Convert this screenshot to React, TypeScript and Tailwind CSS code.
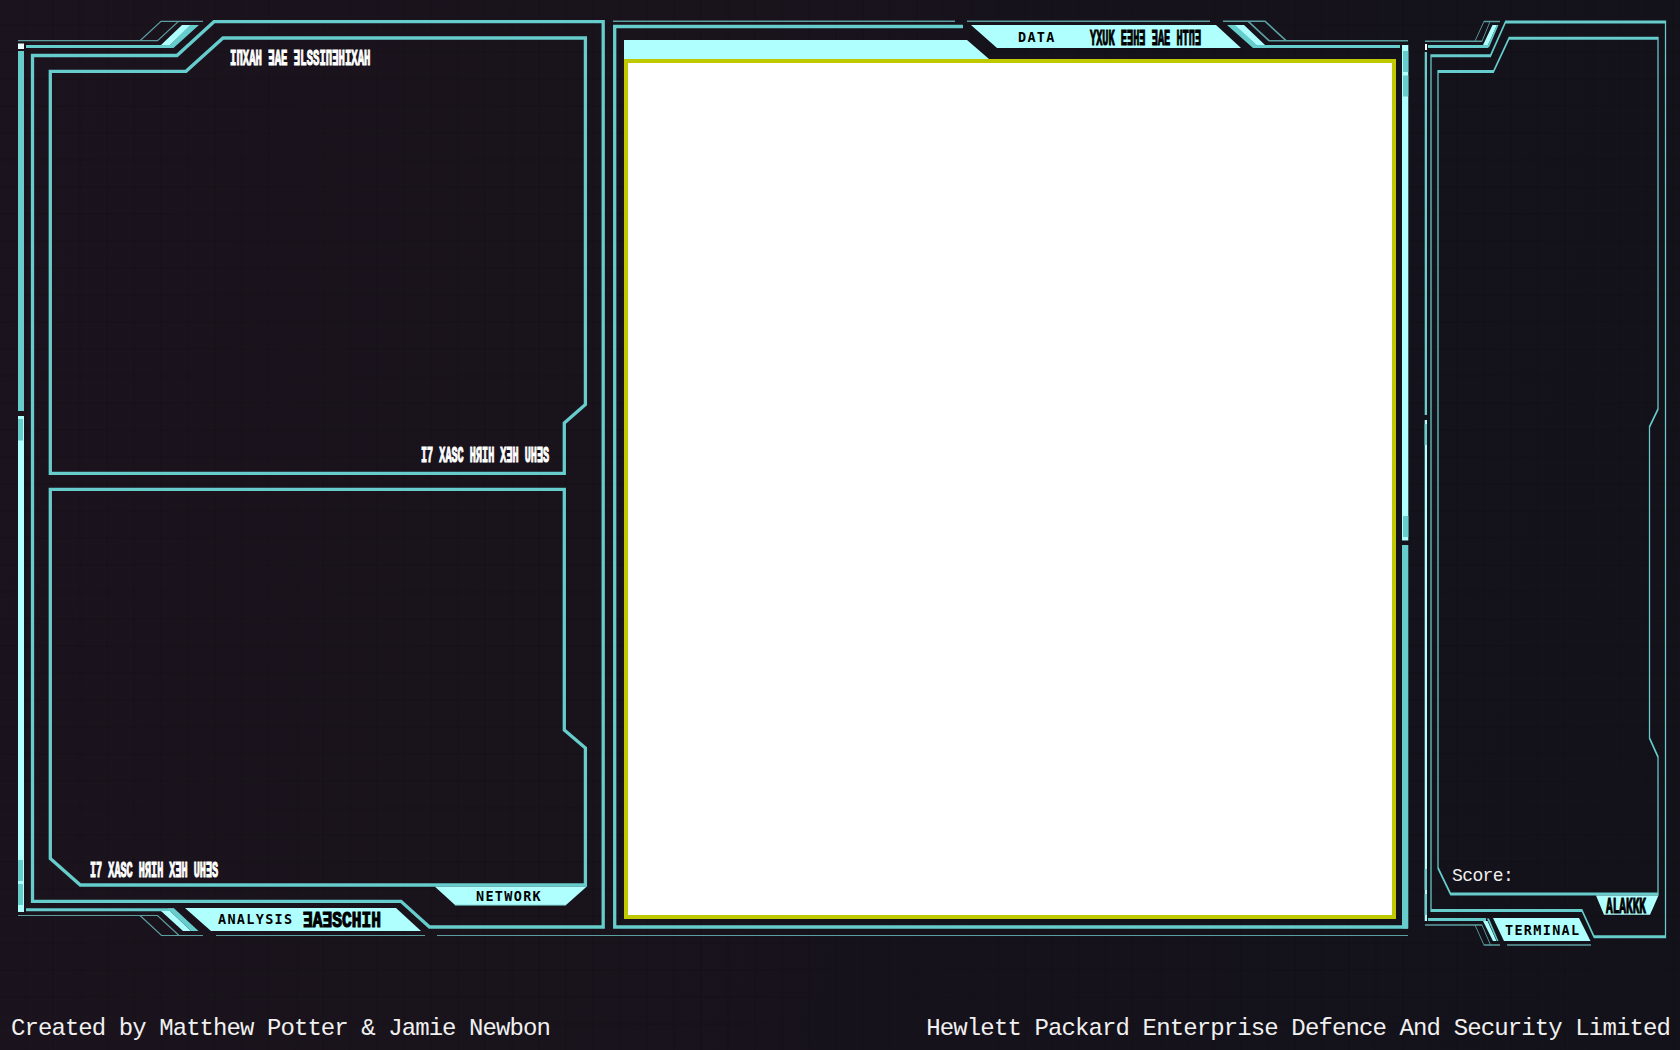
import React from 'react';

const TEAL = '#66cccc';
const LIGHT = '#b0ffff';
const DIM = '#5c9fa1';

type Pt = [number, number];

const RIGHT_X = 1412;
const SQUEEZE = 0.42;

/* The terminal frame is horizontally squeezed, strokes included. */
function squeeze(points: Pt[]) {
  return points.map(([x, y]) => `${(x - RIGHT_X) / SQUEEZE},${y}`).join(' ');
}

function Runes({ children, box, scale }: { children: string; box: string; scale: string }) {
  return (
    <div className={`h-4 shrink-0 ${box}`}>
      <span
        className={`block w-max origin-left whitespace-pre font-['Liberation_Mono',monospace] text-[22.5px] leading-[20px] font-bold [-webkit-text-stroke:1.2px_currentColor] ${scale}`}
      >
        {children}
      </span>
    </div>
  );
}

function Label({ children, box }: { children: string; box: string }) {
  return (
    <span
      className={`block h-4 shrink-0 whitespace-pre font-['DejaVu_Sans_Mono',monospace] text-[13.5px] leading-[17px] font-bold tracking-[1.3px] text-black ${box}`}
    >
      {children}
    </span>
  );
}

function AnalysisFrame() {
  return (
    <svg className="absolute inset-0" width="608" height="960" viewBox="0 0 608 960" fill="none">
      <g stroke={DIM} strokeWidth="1.2">
        <path d="M18 40.7H157.5L178.5 21.4M140 40.7L161 21.4H203" />
        <path d="M18 915.5H157.5L179 935.5M140 915.5L161.500 935.500H203M216 935.500H425M437 935.500H608" />
      </g>
      <path d="M26 46.500H173M26 909.700H174" stroke={TEAL} strokeWidth="3" />
      <path d="M161 45L182 25H191L170 45Z" fill={LIGHT} />
      <path d="M190 25H199L173.500 48H167L170 45Z" fill={TEAL} />
      <path d="M161 911L183 931H191L170 911Z" fill={LIGHT} />
      <path d="M170 911L168 908.200H174L198.500 931H191Z" fill={TEAL} />
      <g stroke={TEAL} strokeWidth="3.3">
        <path d="M32.500 55.500H177L214 21.700H603.200V927H429.500L401 901.300H32.500Z" />
        <path d="M50.300 71.300H186L223 38H585.400V404.500L564.300 423V473.300H50.300Z" />
        <path d="M50.300 489.300H564.300V730L585.400 748V885H80.300L50.300 858.500Z" />
      </g>
      <rect x="18" y="43.500" width="6" height="5.500" fill="#e9ffff" />
      <rect x="18" y="51" width="6" height="360" fill={TEAL} />
      <rect x="18" y="416" width="6" height="496" fill={LIGHT} />
      <rect x="18" y="419" width="5" height="21.500" fill={TEAL} />
      <rect x="18" y="860" width="5" height="21" fill={TEAL} />
      <rect x="18" y="884" width="5" height="21" fill={TEAL} />
      <path d="M185 908H396L421 931H211Z" fill={LIGHT} />
      <path d="M435 886.700H586.500L566 905H455Z" fill={LIGHT} />
      <path d="M455 905.300H566" stroke={DIM} />
    </svg>
  );
}

function DataFrame() {
  return (
    <svg className="absolute inset-0" width="804" height="960" viewBox="608 0 804 960" fill="none">
      <g stroke={DIM} strokeWidth="1.6">
        <path d="M613 21.200H955M967 21.200H1210M1223 21.200H1265L1286 40.700M1248 21.200L1269 40.700H1408" />
      </g>
      <path d="M608 935.500H1408" stroke={DIM} strokeWidth="1.2" />
      <path d="M963 26.500H614.700V927H1408" stroke={TEAL} strokeWidth="3.300" />
      <path d="M624 40H967L989 59H624Z" fill={LIGHT} />
      <path d="M971 25H1216L1241 48H997Z" fill={LIGHT} />
      <path d="M1227 25H1236L1258 45H1262V48H1253Z" fill={TEAL} />
      <path d="M1235 25H1244L1265 45H1257Z" fill={LIGHT} />
      <path d="M1256 46.500H1400" stroke={TEAL} strokeWidth="3" />
      <rect x="1402" y="45" width="6.300" height="495.500" fill={LIGHT} />
      <rect x="1403" y="51" width="5.300" height="21" fill={TEAL} />
      <rect x="1403" y="75.500" width="5.300" height="21" fill={TEAL} />
      <rect x="1403" y="516" width="5.300" height="21" fill={TEAL} />
      <rect x="1402" y="545" width="6.300" height="383.500" fill={TEAL} />
    </svg>
  );
}

function TerminalFrame() {
  return (
    <svg className="absolute inset-0" width="268" height="960" viewBox="0 0 268 960" fill="none">
      <g transform={`scale(${SQUEEZE} 1)`}>
        <g stroke={DIM} strokeWidth="1.6">
          <polyline points={squeeze([[1425, 41.3], [1482, 41.3], [1490, 21.5]])} />
          <polyline points={squeeze([[1475, 41], [1484, 21.500], [1500, 21.500]])} />
          <polyline points={squeeze([[1425, 925], [1482, 925], [1490.500, 945]])} />
          <polyline points={squeeze([[1475, 925], [1484, 945], [1500, 945]])} />
          <polyline points={squeeze([[1507, 945], [1591, 945]])} />
        </g>
        <g stroke={TEAL} strokeWidth="3">
          <polyline points={squeeze([[1428, 46.500], [1488, 46.500]])} />
          <polyline points={squeeze([[1428, 919.500], [1486, 919.500]])} />
          <polygon points={squeeze([[1431, 55.700], [1490.500, 55.700], [1505.500, 22], [1665.500, 22], [1665.500, 936.700], [1594, 936.700], [1582, 910.500], [1431, 910.500]])} />
          <polygon points={squeeze([[1438, 71.500], [1493.500, 71.500], [1509, 38.300], [1658, 38.300], [1658, 409], [1649.500, 427], [1649.500, 738], [1658, 757], [1658, 894], [1450.500, 894], [1438, 868]])} />
        </g>
        <polygon fill={LIGHT} points={squeeze([[1483, 45], [1492.500, 25], [1497, 25], [1488, 45]])} />
        <polygon fill={TEAL} points={squeeze([[1497, 25], [1498.500, 25], [1489, 47.500], [1487, 47]])} />
        <polygon fill={LIGHT} points={squeeze([[1483, 921], [1487.500, 921], [1496.500, 941], [1493, 941]])} />
        <polygon fill={TEAL} points={squeeze([[1487, 918.500], [1489, 918.500], [1498.500, 941], [1497, 941]])} />
        <polygon fill={LIGHT} points={squeeze([[1493, 918], [1579, 918], [1590.500, 941], [1504, 941]])} />
        <polygon fill={LIGHT} points={squeeze([[1596, 895.500], [1658.500, 895.500], [1650, 914.700], [1604, 914.700]])} />
      </g>
      <rect x="13" y="44" width="2" height="6" fill="#fff" />
      <rect x="12.700" y="52" width="2.300" height="363" fill={TEAL} />
      <rect x="12.700" y="420" width="2.300" height="501" fill={LIGHT} />
      <rect x="12.700" y="424" width="2.300" height="21" fill={TEAL} />
      <rect x="12.700" y="869" width="2.300" height="21" fill={TEAL} />
      <rect x="12.700" y="894" width="2.300" height="21" fill={TEAL} />
    </svg>
  );
}

function AnalysisPanel() {
  return (
    <section className="relative h-[960px] w-[608px] shrink-0">
      <AnalysisFrame />
      <div className="relative flex flex-col text-white">
        <div className="h-[446px] pt-[49px] pl-[230px]">
          <Runes box="w-[140px]" scale="scale-x-[0.473]">IПXAH ƎAE ƎLSSIПƎHIXAH</Runes>
        </div>
        <div className="h-[366px] pl-[421px]">
          <Runes box="w-[128px]" scale="scale-x-[0.452]">I7 XASC HЯIH XƎH UHƎS</Runes>
        </div>
        <div className="h-[66px] pt-[49px] pl-[90px]">
          <Runes box="w-[128px]" scale="scale-x-[0.452]">I7 XASC HЯIH XƎH UHƎS</Runes>
        </div>
        <div className="mt-[10px] pl-[476px]">
          <Label box="w-[68px]">NETWORK</Label>
        </div>
        <div className="mt-[7px] flex items-center gap-[9px] pl-[218px]">
          <Label box="w-[76px]">ANALYSIS</Label>
          <div className="text-black">
            <Runes box="w-[78px]" scale="scale-x-[0.722]">ƎAƎSCHIH</Runes>
          </div>
        </div>
      </div>
    </section>
  );
}

function DataPanel() {
  return (
    <section className="relative h-[960px] w-[804px] shrink-0">
      <DataFrame />
      <div className="relative flex flex-col">
        <div className="flex h-[59px] gap-[34px] pt-[29px] pl-[410px] text-black">
          <Label box="w-[38px]">DATA</Label>
          <Runes box="w-[111px]" scale="scale-x-[0.457]">YXUK EƎHƎ ƎAE HTПƎ</Runes>
        </div>
        <div className="ml-4 h-[860px] w-[772px] border-4 border-[#c0c800] bg-white" />
      </div>
    </section>
  );
}

function TerminalPanel() {
  return (
    <section className="relative h-[960px] w-[268px] shrink-0">
      <TerminalFrame />
      <div className="relative flex flex-col">
        <p className="mt-[866px] ml-[40px] h-5 font-['Liberation_Mono',monospace] text-[18px] leading-5 tracking-[-0.6px] text-[#f0f0f0]">
          Score:
        </p>
        <div className="mt-[11px] ml-[194px] text-black">
          <Runes box="w-[40px]" scale="scale-x-[0.494]">ALAKKK</Runes>
        </div>
        <div className="mt-[9px] ml-[93px]">
          <Label box="w-[77px]">TERMINAL</Label>
        </div>
      </div>
    </section>
  );
}

export default function App() {
  return (
    <div className="flex h-[1050px] w-[1680px] flex-col overflow-hidden bg-[repeating-linear-gradient(90deg,transparent_0_25px,rgba(0,0,0,0.07)_25px_27px),repeating-linear-gradient(0deg,transparent_0_25px,rgba(0,0,0,0.07)_25px_27px),linear-gradient(100deg,#1b131d,#19131c_38%,#15121b_62%,#13121a)]">
      <main className="flex h-[960px]">
        <AnalysisPanel />
        <DataPanel />
        <TerminalPanel />
      </main>
      <footer className="flex h-[90px] justify-between pt-[55px] pr-[10px] pl-[11px] font-['Liberation_Mono',monospace] text-[24px] leading-7 text-[#f0f0f0]">
        <span className="tracking-[-0.93px]">Created by Matthew Potter &amp; Jamie Newbon</span>
        <span className="tracking-[-0.88px]">Hewlett Packard Enterprise Defence And Security Limited</span>
      </footer>
    </div>
  );
}
